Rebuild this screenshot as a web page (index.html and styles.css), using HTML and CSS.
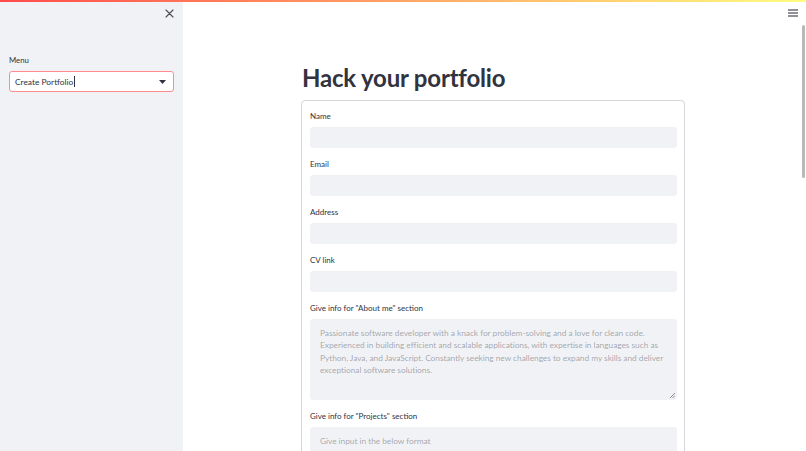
FILE: index.html
```html
<!DOCTYPE html>
<html>
<head>
<meta charset="utf-8">
<link rel="stylesheet" href="styles.css">
</head>
<body>
<div class="decoration"></div>
<div class="app">
  <aside class="sidebar">
    <div class="sidebar-top">
      <svg class="close" width="9" height="9" viewBox="0 0 9 9"><path d="M1 1L8 8M8 1L1 8" stroke="#4a4c55" stroke-width="1.1" stroke-linecap="round"/></svg>
    </div>
    <div class="side-label">Menu</div>
    <div class="select">
      <span class="select-value">Create Portfolio<span class="caret"></span></span>
      <svg class="arrow" width="7" height="4" viewBox="0 0 7 4"><path d="M0 0H7L3.5 4Z" fill="#31333f"/></svg>
    </div>
  </aside>
  <main class="main">
    <div class="toolbar">
      <svg class="menu" width="10" height="8" viewBox="0 0 10 8"><path d="M0 1H10M0 4H10M0 7H10" stroke="#6b6d76" stroke-width="1.3"/></svg>
    </div>
    <div class="content">
      <h1 class="title">Hack your portfolio</h1>
      <div class="form">
        <div class="field"><div class="label">Name</div><div class="input"></div></div>
        <div class="field"><div class="label">Email</div><div class="input"></div></div>
        <div class="field"><div class="label">Address</div><div class="input"></div></div>
        <div class="field"><div class="label">CV link</div><div class="input"></div></div>
        <div class="field"><div class="label">Give info for "About me" section</div>
          <div class="textarea">
            <p class="placeholder">Passionate software developer with a knack for problem-solving and a love for clean code. Experienced in building efficient and scalable applications, with expertise in languages such as Python, Java, and JavaScript. Constantly seeking new challenges to expand my skills and deliver exceptional software solutions.</p>
            <svg class="grip" width="5" height="5" viewBox="0 0 5 5"><path d="M5 0L0 5M5 2.5L2.5 5" stroke="#777" stroke-width="0.8"/></svg>
          </div>
        </div>
        <div class="field"><div class="label">Give info for "Projects" section</div>
          <div class="textarea">
            <p class="placeholder">Give input in the below format</p>
          </div>
        </div>
      </div>
    </div>
    <div class="scrollbar"></div>
  </main>
</div>
</body>
</html>
```
FILE: styles.css
```css
html, body {
  margin: 0;
  padding: 0;
  height: 100%;
  overflow: hidden;
}
body {
  font-family: "Lato", "Liberation Sans", sans-serif;
  color: #31333f;
  background: #ffffff;
  position: relative;
}
.decoration {
  position: absolute;
  top: 0;
  left: 0;
  right: 0;
  height: 2px;
  background: linear-gradient(90deg, rgb(255, 75, 75), rgb(255, 253, 128));
  z-index: 2;
}
.app {
  display: flex;
  height: 100%;
}
.sidebar {
  width: 183px;
  flex: none;
  background: #f0f2f6;
  padding: 0 9px;
  box-sizing: border-box;
}
.sidebar-top {
  height: 55px;
  display: flex;
  justify-content: flex-end;
  align-items: flex-start;
  padding-top: 9px;
  box-sizing: border-box;
}
.close {
  margin-right: 0;
}
.side-label {
  font-size: 7.8px;
  line-height: 10px;
  margin-bottom: 6px;
}
.select {
  height: 21px;
  width: 165px;
  box-sizing: border-box;
  background: #ffffff;
  border: 1px solid rgb(255, 140, 140);
  border-radius: 3px;
  display: flex;
  align-items: center;
  justify-content: space-between;
  padding: 0 7px 0 5px;
}
.select-value {
  font-size: 8.4px;
  display: flex;
  align-items: center;
}
.caret {
  display: inline-block;
  width: 1px;
  height: 11px;
  background: #31333f;
  margin-left: 1px;
}
.main {
  flex: 1;
  position: relative;
}
.toolbar {
  height: 25px;
  display: flex;
  justify-content: flex-end;
  align-items: flex-start;
  padding: 9px 8px 0 0;
  box-sizing: border-box;
}
.content {
  width: 384px;
  margin-left: 118px;
}
.title {
  font-size: 24px;
  font-weight: 700;
  line-height: 30px;
  margin: 38px 0 0 1px;
  letter-spacing: -0.2px;
}
.form {
  margin-top: 7px;
  border: 1px solid rgba(49, 51, 63, 0.2);
  border-radius: 4px;
  padding: 10px 7px 0 8px;
  display: flex;
  flex-direction: column;
  gap: 11px;
}
.label {
  font-size: 8px;
  line-height: 10px;
  margin-bottom: 6px;
}
.input {
  height: 21px;
  background: #f0f2f6;
  border-radius: 3px;
}
.textarea {
  height: 81px;
  background: #f0f2f6;
  border-radius: 3px;
  position: relative;
  padding: 8px 9px 0 10px;
  box-sizing: border-box;
}
.placeholder {
  margin: 0;
  font-size: 8.4px;
  letter-spacing: -0.05px;
  line-height: 12.3px;
  color: rgba(49, 51, 63, 0.42);
}
.grip {
  position: absolute;
  right: 2px;
  bottom: 2px;
}
.scrollbar {
  position: absolute;
  right: 1px;
  top: 25px;
  width: 3px;
  height: 153px;
  border-radius: 2px;
  background: #b9b9b9;
}
```
